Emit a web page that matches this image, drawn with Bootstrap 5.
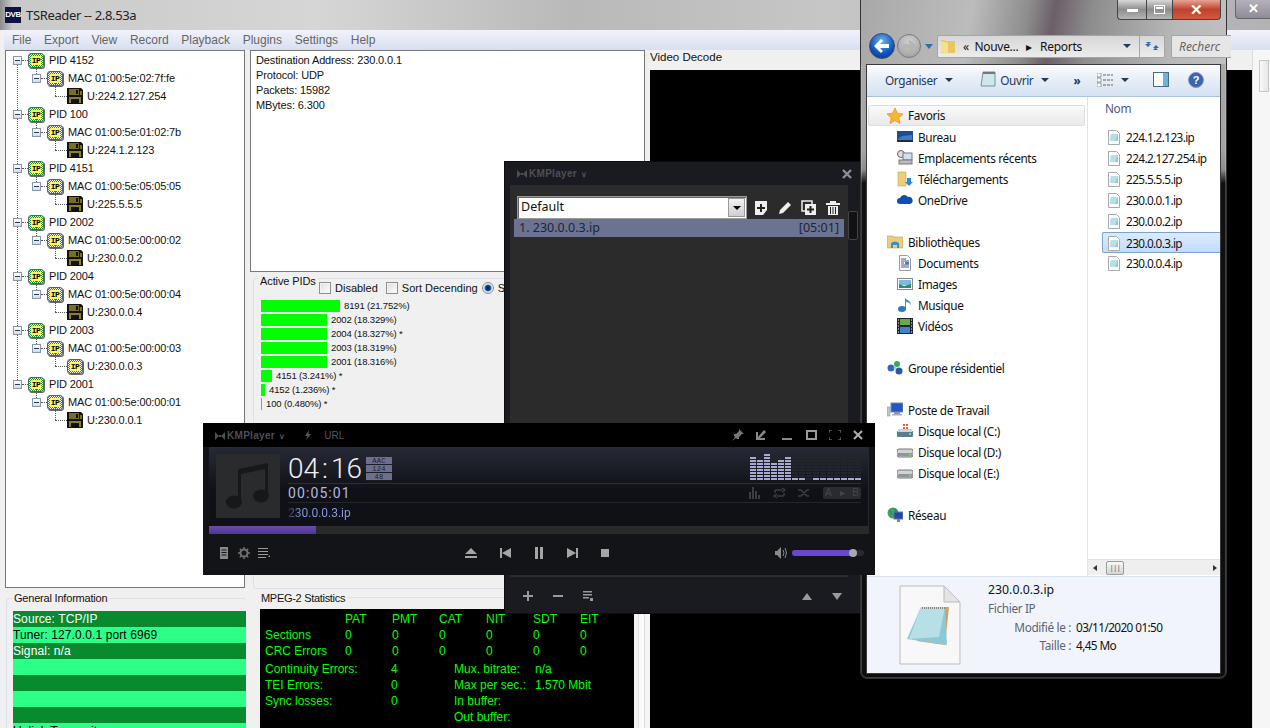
<!DOCTYPE html>
<html lang="fr">
<head>
<meta charset="utf-8">
<title>TSReader</title>
<link href="https://cdn.jsdelivr.net/npm/bootstrap@5.3.0/dist/css/bootstrap.min.css" rel="stylesheet">
<style>
html,body{margin:0;width:1270px;height:728px;overflow:hidden;background:#000;}
body{font-family:"Liberation Sans",Arial,sans-serif;position:relative;}
.sym-defs{width:0;height:0;overflow:hidden;display:block;}

/* TSReader */
.ts-win{position:absolute;left:0;top:0;width:1270px;height:728px;overflow:hidden;background:#f0f0f0;}
.ts-title{height:30px;background:linear-gradient(90deg,#8d8d8d 0,#c9c9c9 1%,#d6d6d6 25%,#b9b9b9 45%,#c6c6c6 65%,#b4b1b6 100%);padding-left:5px;gap:5px;}
.ts-logo{width:16px;height:16px;background:#0d1440;color:#fff;font:bold 8px/16px "Liberation Sans",sans-serif;text-align:center;letter-spacing:-.5px;}
.ts-cap{font:13px "Noto Sans",sans-serif;color:#222;letter-spacing:-.35px;}
.ts-x{margin-left:auto;align-self:flex-start;width:35px;height:19px;background:linear-gradient(#b5b0bb,#8f8b98);border:1px solid #666;border-top:0;border-right:0;border-radius:0 0 0 4px;color:#fff;text-align:center;font:bold 13px/18px "Liberation Sans",sans-serif;}
.ts-menu{height:20px;margin-left:4px;padding-left:8px;gap:12.7px;background:linear-gradient(#f1f3fb,#d8dff1);font:12px/20px "Liberation Sans",sans-serif;color:#666;}
.ts-body{display:grid;grid-template-columns:250px 400px 602px 18px;height:678px;}
.ts-left,.ts-mid,.ts-right{min-width:0;overflow:hidden;}
.ts-tree{margin-left:5px;width:240px;height:538px;background:#fff;border:1px solid #777;padding-top:0;font-size:11px;letter-spacing:-.15px;color:#111;overflow:hidden;}
.t-row{height:18px;position:relative;display:flex;align-items:center;}
.t-row.l0{padding-left:7px;}
.t-row.l1{padding-left:26px;}
.t-row.l2{padding-left:49px;}
.t-row.l0:not(.t-end)::before{content:"";position:absolute;left:11px;top:13px;height:50px;border-left:1px dotted #555;}
.t-row.l1::before{content:"";position:absolute;left:30px;top:-4px;height:9px;border-left:1px dotted #555;}
.t-row.l2::before{content:"";position:absolute;left:49px;top:-4px;height:13px;border-left:1px dotted #555;}
.t-xp{width:9px;height:9px;border:1px solid #8a97a8;background:linear-gradient(#fff,#d5dce6);flex:none;display:flex;align-items:center;justify-content:center;z-index:1;}
.t-xp::after{content:"";width:5px;height:1px;background:#223a66;}
.t-dash{height:0;border-top:1px dotted #555;flex:none;width:6px;}
.l2 .t-dash{width:12px;}
.ipi{width:16px;height:15px;flex:none;border:1px solid #55606a;border-radius:3px;background:repeating-conic-gradient(#129a2c 0 25%,#f2f7ee 0 50%) 0 0/2px 2px;box-shadow:1px 1px 0 #666;display:flex;align-items:center;justify-content:center;}
.ipi b{background:#fff65a;color:#000;font:bold 8px/9px "Liberation Mono",monospace;padding:0 1px;letter-spacing:-.5px;}
.t-txt{margin-left:5px;white-space:nowrap;}
.l2 .t-txt{margin-left:4px;}
.flop{width:16px;height:16px;flex:none;}
.grp-line{border:1px solid #dce1e7;border-radius:4px;position:relative;}
.grp-gen{margin:10px 0 0 6px;width:240px;height:140px;border-right:0;}
.grp-lbl{position:absolute;background:#f0f0f0;padding:0 2px;font-size:11.5px;line-height:14px;color:#111;white-space:nowrap;letter-spacing:-.1px;}
.grp-gen>.grp-lbl{left:5px;top:-8px;font-size:11px;letter-spacing:-.2px;}
.gen-rows{position:absolute;left:6px;right:0;top:12px;}
.gen-row{height:16px;background:#2aff8a;color:#000;font-size:12px;line-height:16px;letter-spacing:.1px;white-space:nowrap;}
.gen-row:nth-child(odd){background:#0a8a2e;color:#fff;}
.ts-info{height:222px;width:395px;background:#fff;border:1px solid #777;padding:2px 5px;font-size:11px;letter-spacing:-.13px;line-height:15px;color:#111;}
.grp-pid{margin:6px 0 0 3px;width:393px;height:311px;border-right:0;}
.grp-pid>.grp-lbl{left:4px;top:-5px;font-size:11px;}
.pid-opts{position:absolute;left:65px;top:2px;font-size:11px;color:#111;white-space:nowrap;line-height:14px;}
.cb-box{width:12px;height:12px;border:1px solid #8e8f8f;background:linear-gradient(135deg,#dcdcdc,#fff);box-shadow:inset 0 0 0 1px #f4f4f4;flex:none;}
.rd-box{width:12px;height:12px;border-radius:50%;border:1px solid #8e8f8f;background:radial-gradient(circle,#0e2b5e 0 2px,#2f7fc4 3px,#dfe7ef 4px);flex:none;}
.pid-list{position:absolute;left:7px;top:20px;font-size:9.5px;letter-spacing:-.15px;color:#111;}
.pid-row{height:14px;gap:4px;white-space:nowrap;line-height:14px;}
.pid-bar{height:12px;background:#0f0;flex:none;}
.mpeg-wrap{position:relative;height:130px;margin:8px 0 0 10px;width:390px;border-top:1px solid #dce1e7;}
.mpeg-wrap>.grp-lbl{left:-1px;top:-7px;font-size:11px;letter-spacing:-.3px;}
.mpeg{position:absolute;left:0;top:11px;width:374px;height:130px;background:#000;color:#0f0;font-size:12px;line-height:16px;padding:2px 0 0 5px;white-space:nowrap;}
.mp-grid{display:grid;grid-template-columns:80px repeat(6,47px);}
.mp-stats{display:grid;grid-template-columns:126px 63px 81px 1fr;margin-top:2px;}
.vid-lbl{font-size:11.5px;line-height:14px;color:#111;height:20px;}
.vid-black{background:#000;height:658px;}
.ts-sb{background:#f6f6f6;border-left:1px solid #ddd;padding:10px 2px 0 6px;}
.sb-top{height:32px;width:10px;background:linear-gradient(90deg,#f8f8f8,#e6e6e6);border:1px solid #c8c8c8;}
.mid-strip{position:absolute;left:634px;top:610px;width:16px;height:118px;background:linear-gradient(90deg,#f3f3f3 0 4px,#ddd 4px 5px,#fafafa 5px 10px,#ddd 10px 11px,#f5f5f5 11px);}

/* KMPlayer playlist */
.km-list{position:absolute;left:504px;top:161px;width:359px;height:453px;background:#1a1b20;border:1px solid #0d0d0f;color:#8d8f96;}
.km-bar{height:23px;padding:0 10px 0 12px;}
.km-brand{font:bold 10px "Liberation Sans",sans-serif;color:#4e4f55;letter-spacing:.3px;white-space:nowrap;}
.km-brand svg{vertical-align:-1px;margin-right:2px;}
.km-chev{color:#4e4f55;font-size:8px;margin-left:4px;}
.km-panel{margin-left:5px;width:339px;height:390px;background:#2b2b2b;padding:11px 0 0 4px;}
.km-side{width:14px;height:390px;padding-top:26px;}
.km-thumb{width:10px;height:29px;background:#121214;border:1px solid #444;border-radius:2px;}
.km-sel{width:230px;height:23px;background:#fff;border:1px solid #9a9a9a;margin-left:3px;font:12.5px/20px "Noto Sans",sans-serif;color:#111;padding-left:3px;box-shadow:inset 1px 1px 0 #666;}
.km-dd{margin-left:auto;width:17px;height:19px;margin-top:1px;margin-right:1px;background:linear-gradient(#f2f2f2,#cfcfcf);border:1px solid #999;}
.km-dd::after{content:"";display:block;margin:7px auto 0;width:0;height:0;border:4px solid transparent;border-top:4px solid #000;border-bottom:0;}
.km-tools{gap:8px;margin-left:6px;}
.km-item{width:330px;height:18px;background:#6b7391;color:#1f2436;font:12.5px/18px "Noto Sans",sans-serif;padding:0 5px;}
.km-foot{height:40px;border-top:2px solid #2b2b2b;padding:0 6px 0 13px;margin:0 14px 0 5px;}
.km-foot-g{gap:20px;}

/* KMPlayer main */
.km-main{position:absolute;left:203px;top:423px;width:672px;height:152px;background:#131417;color:#9a9a9a;}
.km-mtitle{height:24px;background:#000;padding:0 12px 0 12px;gap:10px;}
.km-url{font-size:10px;color:#56575c;margin-left:1px;}
.km-wins{margin-left:auto;gap:12px;}
.km-disp{margin-left:6px;width:660px;height:79px;background:linear-gradient(#262a36,#101116 55%);padding:7px 7px 0 7px;gap:8px;border-right:1px solid #25272e;}
.km-art{width:64px;height:64px;background:#2a2b2d;flex:none;}
.km-info{width:574px;}
.km-row1{height:30px;border-bottom:1px solid #2b2e36;}
.km-time{font:300 28px/30px Roboto,sans-serif;color:#eef0f6;gap:3px;white-space:nowrap;}
.km-tags{width:26px;margin-left:4px;margin-top:3px;gap:0;}
.km-tag{height:8px;background:#6e6f8e;color:#1c1d2b;font:7px/8px "Liberation Mono",monospace;text-align:center;border-bottom:1px solid #1b1d25;letter-spacing:.3px;}
.km-viz{margin-left:auto;height:26px;gap:1px;align-items:flex-end;}
.vz{width:6px;height:26px;background:repeating-linear-gradient(0deg,#23252e 0 2px,transparent 2px 3px);position:relative;display:flex;align-items:flex-end;}
.vz i{display:block;width:6px;background:repeating-linear-gradient(0deg,#a8abcf 0 2px,transparent 2px 3px);}
.km-row2{height:19px;border-bottom:1px solid #24262d;}
.km-dur{font:14px/19px Roboto,sans-serif;letter-spacing:1.1px;color:#b4b8e0;padding-top:1px;}
.km-ind{margin-left:auto;gap:12px;}
.km-ab{width:38px;height:12px;background:#2a2b30;border-radius:2px;color:#44454b;font:10px/12px "Liberation Sans",sans-serif;padding:0 2px;}
.km-file{font:12px/20px Roboto,sans-serif;background:linear-gradient(90deg,#33344a 0,#8b9be0 14px,#8b9be0);-webkit-background-clip:text;background-clip:text;color:transparent;width:66px;white-space:nowrap;}
.km-seek{margin-left:6px;width:660px;height:8px;background:#2a2a2a;}
.km-seek i{display:block;width:107px;height:8px;background:linear-gradient(#6a4cb0,#4e3690);}
.km-ctl{height:41px;padding:0 11px 4px 15px;}
.km-ctl-l{gap:8px;}
.km-ctl-m{margin-left:194px;gap:23px;}
.km-ctl-r{margin-left:auto;gap:4px;}
.km-vol{width:72px;height:6px;background:#2a2a2e;border-radius:3px;position:relative;}
.km-vol i{display:block;width:60px;height:6px;background:#6a45d0;border-radius:3px;}
.km-vol b{position:absolute;left:57px;top:-1px;width:8px;height:8px;border-radius:50%;background:#a9a9ad;}

/* Explorer */
.ex-win{position:absolute;left:860px;top:-1px;width:367px;height:680px;border:1px solid #333;border-radius:0 0 7px 7px;background:linear-gradient(#aeaeae 0,#a3a3a3 22%,#8d8d8d 25%,#111 27%,#0d0d0d 100%);padding:0 5px 5px 5px;box-shadow:inset 0 0 0 1px rgba(255,255,255,.2);}
.ex-top{height:64px;margin:0 -5px;padding:0 5px;background:linear-gradient(100deg,#a8a8a8,#bcbcbc 30%,#8d8d8d 45%,#6b5f68 52%,#8d8d8d 62%,#b8b8b8 85%,#c0c0c0);}
.ex-caps{height:34px;align-items:flex-start;justify-content:flex-end;}
.ex-cap{height:20px;border:1px solid #444;border-top:0;background:linear-gradient(#d8d8d8,#8c8c8c 50%,#b5b5b5);display:flex;align-items:center;justify-content:center;}
.ex-min{width:29px;border-radius:0 0 0 4px;border-right:0;}
.ex-max{width:26px;border-right:0;}
.ex-cls{width:49px;background:linear-gradient(#e6a396,#c0422d 50%,#d05a3e);border-radius:0 0 4px 0;color:#fff;font:bold 15px/18px "Liberation Sans",sans-serif;}
.ex-nav{height:24px;padding-left:3px;}
.ex-back{width:26px;height:26px;border-radius:50%;background:radial-gradient(circle at 50% 30%,#6db1f4,#0f53bd 60%,#0a2f78);border:1px solid #3a4a66;flex:none;}
.ex-fwd{width:24px;height:24px;border-radius:50%;margin-left:2px;background:radial-gradient(circle at 50% 30%,#d0d0d0,#9a9a9a);border:1px solid #7a7a7a;flex:none;}
.ex-tri{width:0;height:0;border:4px solid transparent;border-top:5px solid #2b6db5;border-bottom:0;flex:none;}
.ex-addr{height:23px;width:228px;margin-left:4px;background:linear-gradient(#d7d7d7,#ececec);border:1px solid #a5a5a5;border-radius:2px;font:12px "Noto Sans",sans-serif;letter-spacing:-.3px;color:#111;padding-left:3px;flex:none;white-space:nowrap;}
.ex-sep{width:25px;border-left:1px solid #a5a5a5;align-self:stretch;}
.ex-search{height:23px;width:60px;margin-left:6px;background:#e6e6e6;border:1px solid #a5a5a5;border-right:0;border-radius:2px 0 0 2px;font:italic 12px/21px "Noto Sans",sans-serif;color:#666;padding-left:7px;overflow:hidden;white-space:nowrap;flex:none;}
.ex-in{background:#fff;border:1px solid #3a3a3a;height:610px;width:355px;overflow:hidden;font:11.8px "Noto Sans",sans-serif;letter-spacing:-.35px;color:#111;}
.ex-tool{height:32px;background:linear-gradient(#fbfcfe,#e6edf7 50%,#d5e2f2);border-bottom:1px solid #a9c1dc;color:#1e395b;padding:0 0 2px 18px;white-space:nowrap;}
.tri-d{width:0;height:0;border:4px solid transparent;border-top:4px solid #1e395b;border-bottom:0;flex:none;}
.tl-open{margin-left:27px;}
.tl-view{margin-left:17px;}
.tl-help{margin-left:19px;}
.ex-main{height:479px;}
.ex-navp{width:221px;flex:none;border-right:1px solid #d6e5f5;padding-top:8px;}
.ex-fav{margin:0 1px;height:21px;width:217px;border:1px solid #dedede;border-radius:2px;background:linear-gradient(#fafafa,#e9e9e9);}
.n-row{height:21px;display:flex;align-items:center;white-space:nowrap;line-height:19px;padding-top:1px;}
.n-row svg{width:16px;height:16px;flex:none;margin:0 5px 0 0;}
.n-l0{padding-left:20px;}
.n-l1{padding-left:30px;}
.n-gap{height:21px;}
.ex-fav.n-row{padding-left:18px;padding-top:0;}
.ex-files{flex:1;min-width:0;}
.ex-nom{color:#4f5a83;padding:3px 0 0 17px;height:30px;}
.f-row{height:21px;gap:6px;display:flex;align-items:center;margin-left:14px;padding:0 0 1px 6px;white-space:nowrap;letter-spacing:-.62px;}
.f-row.on{background:linear-gradient(#dcebfc,#c2dcfd);border:1px solid #7da2ce;border-right:0;border-radius:2px 0 0 2px;margin-left:14px;padding:0 0 0 5px;margin-right:-1px;}
.f-row svg{width:12px;height:15px;flex:none;margin-top:1px;}
.ex-sb{height:16px;background:#efefef;border-top:1px solid #e3e3e3;margin-top:285px;padding:0 3px 0 5px;}
.ex-thumb{width:18px;height:14px;background:linear-gradient(#f8f8f8,#d5d5d5);border:1px solid #9b9b9b;border-radius:2px;margin-left:9px;color:#444;font-size:7px;line-height:12px;text-align:center;}
.tri-l{width:0;height:0;border:3px solid transparent;border-right:4px solid #333;border-left:0;}
.tri-r{width:0;height:0;border:3px solid transparent;border-left:4px solid #333;border-right:0;margin-left:auto;}
.ex-det{height:97px;background:#f1f5fb;border-top:1px solid #d9e3ef;padding:0 0 0 32px;}
.ex-bigf{width:62px;height:80px;flex:none;margin-top:8px;}
.ex-meta{margin-left:27px;padding-top:4px;line-height:18px;}
.m-name{letter-spacing:0;font-size:12.3px;}
.m-grey{color:#5a6478;}
.m-kv{display:grid;grid-template-columns:83px 1fr;column-gap:5px;margin-top:1px;}
.m-kv>span:nth-child(odd){text-align:right;color:#5a6478;}
.m-kv>span:nth-child(even){letter-spacing:-.6px;}
</style>
</head>
<body>
<svg class="sym-defs" aria-hidden="true">
<defs>
<symbol id="flop" viewBox="0 0 16 16"><path d="M0 0h14l2 2v14H0z" fill="#111"/><rect x="2" y="1" width="10" height="6" fill="#77701c"/><rect x="9" y="2" width="2" height="4" fill="#111"/><rect x="2" y="9" width="12" height="6" fill="#8a8226"/><rect x="4" y="11" width="8" height="4" fill="#111"/><rect x="13" y="3" width="2" height="4" fill="#77701c"/></symbol>
<symbol id="file" viewBox="0 0 12 15"><path d="M.5.5h8l3 3v11H.5z" fill="#fdfdfd" stroke="#a8a8a8"/><path d="M3 4h7v7H2z" fill="#8ccbd6"/><path d="M3 4h7L7 11H2z" fill="#b6e0e6"/></symbol>
<symbol id="kmlogo" viewBox="0 0 10 8"><path d="M0 0l4 4-4 4zM10 0L6 4l4 4zM4 3h2v2H4z" fill="#4e4f55"/></symbol>
</defs>
</svg>

<section class="ts-win">
  <div class="ts-title d-flex align-items-center">
    <div class="ts-logo">DVB</div>
    <div class="ts-cap">TSReader -- 2.8.53a</div>
    <div class="ts-x">&#10005;</div>
  </div>
  <nav class="ts-menu d-flex"><span>File</span><span>Export</span><span>View</span><span>Record</span><span>Playback</span><span>Plugins</span><span>Settings</span><span>Help</span></nav>
  <div class="ts-body">
    <div class="ts-left">
      <div class="ts-tree">
        <div class="t-row l0"><span class="t-xp"></span><span class="t-dash"></span><span class="ipi"><b>IP</b></span><span class="t-txt">PID 4152</span></div>
        <div class="t-row l1"><span class="t-xp"></span><span class="t-dash"></span><span class="ipi"><b>IP</b></span><span class="t-txt">MAC 01:00:5e:02:7f:fe</span></div>
        <div class="t-row l2"><span class="t-dash"></span><svg class="flop"><use href="#flop"/></svg><span class="t-txt">U:224.2.127.254</span></div>
        <div class="t-row l0"><span class="t-xp"></span><span class="t-dash"></span><span class="ipi"><b>IP</b></span><span class="t-txt">PID 100</span></div>
        <div class="t-row l1"><span class="t-xp"></span><span class="t-dash"></span><span class="ipi"><b>IP</b></span><span class="t-txt">MAC 01:00:5e:01:02:7b</span></div>
        <div class="t-row l2"><span class="t-dash"></span><svg class="flop"><use href="#flop"/></svg><span class="t-txt">U:224.1.2.123</span></div>
        <div class="t-row l0"><span class="t-xp"></span><span class="t-dash"></span><span class="ipi"><b>IP</b></span><span class="t-txt">PID 4151</span></div>
        <div class="t-row l1"><span class="t-xp"></span><span class="t-dash"></span><span class="ipi"><b>IP</b></span><span class="t-txt">MAC 01:00:5e:05:05:05</span></div>
        <div class="t-row l2"><span class="t-dash"></span><svg class="flop"><use href="#flop"/></svg><span class="t-txt">U:225.5.5.5</span></div>
        <div class="t-row l0"><span class="t-xp"></span><span class="t-dash"></span><span class="ipi"><b>IP</b></span><span class="t-txt">PID 2002</span></div>
        <div class="t-row l1"><span class="t-xp"></span><span class="t-dash"></span><span class="ipi"><b>IP</b></span><span class="t-txt">MAC 01:00:5e:00:00:02</span></div>
        <div class="t-row l2"><span class="t-dash"></span><svg class="flop"><use href="#flop"/></svg><span class="t-txt">U:230.0.0.2</span></div>
        <div class="t-row l0"><span class="t-xp"></span><span class="t-dash"></span><span class="ipi"><b>IP</b></span><span class="t-txt">PID 2004</span></div>
        <div class="t-row l1"><span class="t-xp"></span><span class="t-dash"></span><span class="ipi"><b>IP</b></span><span class="t-txt">MAC 01:00:5e:00:00:04</span></div>
        <div class="t-row l2"><span class="t-dash"></span><svg class="flop"><use href="#flop"/></svg><span class="t-txt">U:230.0.0.4</span></div>
        <div class="t-row l0"><span class="t-xp"></span><span class="t-dash"></span><span class="ipi"><b>IP</b></span><span class="t-txt">PID 2003</span></div>
        <div class="t-row l1"><span class="t-xp"></span><span class="t-dash"></span><span class="ipi"><b>IP</b></span><span class="t-txt">MAC 01:00:5e:00:00:03</span></div>
        <div class="t-row l2"><span class="t-dash"></span><span class="ipi"><b>IP</b></span><span class="t-txt">U:230.0.0.3</span></div>
        <div class="t-row l0 t-end"><span class="t-xp"></span><span class="t-dash"></span><span class="ipi"><b>IP</b></span><span class="t-txt">PID 2001</span></div>
        <div class="t-row l1"><span class="t-xp"></span><span class="t-dash"></span><span class="ipi"><b>IP</b></span><span class="t-txt">MAC 01:00:5e:00:00:01</span></div>
        <div class="t-row l2"><span class="t-dash"></span><svg class="flop"><use href="#flop"/></svg><span class="t-txt">U:230.0.0.1</span></div>
      </div>
      <div class="grp-line grp-gen">
        <span class="grp-lbl">General Information</span>
        <div class="gen-rows">
          <div class="gen-row">Source: TCP/IP</div>
          <div class="gen-row">Tuner: 127.0.0.1 port 6969</div>
          <div class="gen-row">Signal: n/a</div>
          <div class="gen-row"></div>
          <div class="gen-row"></div>
          <div class="gen-row"></div>
          <div class="gen-row"></div>
          <div class="gen-row">Uplink Transmit</div>
        </div>
      </div>
    </div>
    <div class="ts-mid">
      <div class="ts-info">Destination Address: 230.0.0.1<br>Protocol: UDP<br>Packets: 15982<br>MBytes: 6.300</div>
      <div class="grp-line grp-pid">
        <span class="grp-lbl">Active PIDs</span>
        <div class="pid-opts d-flex align-items-center">
          <span class="cb-box"></span><span class="ms-1">Disabled</span>
          <span class="cb-box ms-2"></span><span class="ms-1">Sort Decending</span>
          <span class="rd-box ms-1"></span><span class="ms-1">Show PIDs</span>
        </div>
        <div class="pid-list">
          <div class="pid-row d-flex align-items-center"><span class="pid-bar" style="width:79px"></span><span>8191 (21.752%)</span></div>
          <div class="pid-row d-flex align-items-center"><span class="pid-bar" style="width:66px"></span><span>2002 (18.329%)</span></div>
          <div class="pid-row d-flex align-items-center"><span class="pid-bar" style="width:66px"></span><span>2004 (18.327%) *</span></div>
          <div class="pid-row d-flex align-items-center"><span class="pid-bar" style="width:66px"></span><span>2003 (18.319%)</span></div>
          <div class="pid-row d-flex align-items-center"><span class="pid-bar" style="width:66px"></span><span>2001 (18.316%)</span></div>
          <div class="pid-row d-flex align-items-center"><span class="pid-bar" style="width:11px"></span><span>4151 (3.241%) *</span></div>
          <div class="pid-row d-flex align-items-center"><span class="pid-bar" style="width:4px"></span><span>4152 (1.236%) *</span></div>
          <div class="pid-row d-flex align-items-center"><span class="pid-bar" style="width:1px"></span><span>100 (0.480%) *</span></div>
        </div>
      </div>
      <div class="mpeg-wrap">
        <span class="grp-lbl">MPEG-2 Statistics</span>
        <div class="mpeg">
          <div class="mp-grid">
            <span></span><span>PAT</span><span>PMT</span><span>CAT</span><span>NIT</span><span>SDT</span><span>EIT</span>
            <span>Sections</span><span>0</span><span>0</span><span>0</span><span>0</span><span>0</span><span>0</span>
            <span>CRC Errors</span><span>0</span><span>0</span><span>0</span><span>0</span><span>0</span><span>0</span>
          </div>
          <div class="mp-stats">
            <span>Continuity Errors:</span><span>4</span><span>Mux. bitrate:</span><span>n/a</span>
            <span>TEI Errors:</span><span>0</span><span>Max per sec.:</span><span>1.570 Mbit</span>
            <span>Sync losses:</span><span>0</span><span>In buffer:</span><span></span>
            <span></span><span></span><span>Out buffer:</span><span></span>
          </div>
        </div>
      </div>
    </div>
    <div class="ts-right">
      <div class="vid-lbl">Video Decode</div>
      <div class="vid-black"></div>
    </div>
    <div class="ts-sb"><div class="sb-top"></div></div>
  </div>
  <div class="mid-strip"></div>
</section>

<section class="km-list">
  <div class="km-bar d-flex align-items-center justify-content-between">
    <span class="km-brand"><svg width="10" height="8"><use href="#kmlogo"/></svg>KMPlayer<span class="km-chev">&#8744;</span></span>
    <svg width="10" height="10" viewBox="0 0 10 10"><path d="M1 1l8 8M9 1L1 9" stroke="#8d8f96" stroke-width="2.4"/></svg>
  </div>
  <div class="d-flex">
    <div class="km-panel">
      <div class="d-flex align-items-center">
        <div class="km-sel d-flex">Default<span class="km-dd"></span></div>
        <div class="km-tools d-flex align-items-center">
          <svg width="16" height="16" viewBox="0 0 16 16"><path d="M2 1h12v9l-4 5H2z" fill="#eee"/><path d="M7 4h2v3h3v2H9v3H7V9H4V7h3z" fill="#222"/></svg>
          <svg width="16" height="16" viewBox="0 0 16 16"><path d="M11 2l3 3-8 8-4 1 1-4z" fill="#eee"/></svg>
          <svg width="16" height="16" viewBox="0 0 16 16"><path d="M1 1h10v10H1z" fill="none" stroke="#eee" stroke-width="1.5"/><path d="M4 4h11v11H4z" fill="#eee"/><path d="M8.500 6h2v2.500H13v2h-2.500V13h-2v-2.500H6v-2h2.500z" fill="#222"/></svg>
          <svg width="16" height="16" viewBox="0 0 16 16"><path d="M1 3h14v2H1zM5 1h6v2H5zM3 6h10v9H3z" fill="#eee"/><path d="M5.500 7v7M8 7v7M10.500 7v7" stroke="#222"/></svg>
        </div>
      </div>
      <div class="km-item d-flex justify-content-between"><span>1. 230.0.0.3.ip</span><span>[05:01]</span></div>
    </div>
    <div class="km-side"><div class="km-thumb"></div></div>
  </div>
  <div class="km-foot d-flex align-items-center justify-content-between">
    <div class="km-foot-g d-flex align-items-center">
      <svg width="10" height="10" viewBox="0 0 10 10"><path d="M4 0h2v4h4v2H6v4H4V6H0V4h4z" fill="#9a9a9a"/></svg>
      <svg width="10" height="10" viewBox="0 0 10 10"><path d="M0 4h10v2H0z" fill="#9a9a9a"/></svg>
      <svg width="10" height="10" viewBox="0 0 10 10"><path d="M0 0h9v1.500H0zM0 3h9v1.500H0zM0 6h6v1.500H0zM7 7h3v3H7z" fill="#9a9a9a"/></svg>
    </div>
    <div class="km-foot-g d-flex align-items-center">
      <svg width="10" height="7" viewBox="0 0 10 7"><path d="M5 0l5 7H0z" fill="#9a9a9a"/></svg>
      <svg width="10" height="7" viewBox="0 0 10 7"><path d="M5 7L0 0h10z" fill="#9a9a9a"/></svg>
    </div>
  </div>
</section>

<section class="ex-win">
  <div class="ex-top">
    <div class="ex-caps d-flex">
      <div class="ex-cap ex-min"><svg width="11" height="4"><rect width="11" height="3" y="1" fill="#fff"/></svg></div>
      <div class="ex-cap ex-max"><svg width="11" height="9"><rect x=".5" y=".5" width="10" height="8" fill="none" stroke="#fff"/><rect x="2" y="2" width="7" height="2" fill="#fff"/></svg></div>
      <div class="ex-cap ex-cls">&#10005;</div>
    </div>
    <div class="ex-nav d-flex align-items-center">
      <div class="ex-back d-flex align-items-center justify-content-center"><svg width="16" height="14" viewBox="0 0 16 14"><path d="M7 0l2 2-3 3h9v4H6l3 3-2 2-7-7z" fill="#fff"/></svg></div>
      <div class="ex-fwd d-flex align-items-center justify-content-center"><svg width="14" height="12" viewBox="0 0 16 14"><path d="M9 0L7 2l3 3H1v4h9l-3 3 2 2 7-7z" fill="#b4b4b4"/></svg></div>
      <span class="ex-tri ms-1"></span>
      <div class="ex-addr d-flex align-items-center">
        <svg width="14" height="16" viewBox="0 0 14 16"><path d="M0 2h4v1h10v12H0z" fill="#e8c85e"/><path d="M0 3l7 2v11L0 14z" fill="#f6df8e"/></svg>
        <span class="ms-2">&#171;&nbsp; Nouve...</span><span class="mx-2">&#9656;</span><span>Reports</span>
        <span class="tri-d ms-auto me-1"></span>
        <div class="ex-sep d-flex align-items-center justify-content-center ms-1"><svg width="14" height="14" viewBox="0 0 14 14"><path d="M6 0v3H1l2 2H0l3 3 3-3H4l2-2z" fill="#2a6ab8"/><path d="M8 14v-3h5l-2-2h3l-3-3-3 3h2l-2 2z" fill="#2a6ab8"/></svg></div>
      </div>
      <div class="ex-search">Recherc</div>
    </div>
  </div>
  <div class="ex-in">
    <div class="ex-tool d-flex align-items-center">
      <span>Organiser</span><span class="tri-d ms-2"></span>
      <svg class="tl-open" width="16" height="17" viewBox="0 0 16 17"><path d="M3 1h12v14H1z" fill="#cfe6ec" stroke="#7d8f9c"/><path d="M3 1h12v2H3z" fill="#777"/></svg>
      <span class="ms-1">Ouvrir</span><span class="tri-d ms-2"></span>
      <span class="ms-4 fw-bold">&#187;</span>
      <svg class="tl-view" width="16" height="14" viewBox="0 0 16 14"><path d="M0 0h4v4H0zM0 5h4v4H0zM0 10h4v4H0z" fill="#fff" stroke="#777" stroke-width=".7"/><path d="M6 2h10M6 7h10M6 12h10" stroke="#566" stroke-dasharray="3 1"/></svg>
      <span class="tri-d ms-2"></span>
      <svg class="ms-4" width="16" height="15" viewBox="0 0 16 15"><rect x=".5" y=".5" width="15" height="14" fill="#fff" stroke="#4a6a8c"/><rect x="10" y="1" width="5" height="13" fill="#6ab3dc"/></svg>
      <svg class="tl-help" width="16" height="16" viewBox="0 0 16 16"><circle cx="8" cy="8" r="7.500" fill="#3b64b4" stroke="#8b95a8"/><text x="8" y="12" text-anchor="middle" fill="#fff" font-size="11" font-weight="bold" font-family="Liberation Sans">?</text></svg>
    </div>
    <div class="ex-main d-flex">
      <div class="ex-navp">
        <div class="n-row ex-fav"><svg viewBox="0 0 16 16"><path d="M8 0l2.400 5.200 5.600.7-4.100 3.900 1.100 5.600L8 12.600 3 15.400l1.100-5.600L0 5.900l5.600-.7z" fill="#f8b632" stroke="#d9822b" stroke-width=".6"/></svg>Favoris</div>
        <div class="n-row n-l1"><svg viewBox="0 0 16 16"><rect y="2" width="16" height="11" fill="#1d4d94"/><rect y="11" width="16" height="2" fill="#2a2a2a"/><path d="M1 10l4-3 10-1v5H1z" fill="#3b7dc5"/></svg>Bureau</div>
        <div class="n-row n-l1"><svg viewBox="0 0 16 16"><circle cx="4" cy="4" r="3.500" fill="#ddd" stroke="#666"/><rect x="6" y="3" width="9" height="7" fill="#cfe0ee" stroke="#778"/><rect x="2" y="10" width="13" height="4" fill="#bbb" stroke="#778"/></svg>Emplacements récents</div>
        <div class="n-row n-l1"><svg viewBox="0 0 16 16"><path d="M1 1h8v14H1z" fill="#eccf76" stroke="#b6983f" stroke-width=".5"/><path d="M10 7h4v4h2l-4 4-4-4h2z" fill="#2e86d8"/></svg>Téléchargements</div>
        <div class="n-row n-l1"><svg viewBox="0 0 16 16"><path d="M3 12a3 3 0 0 1 0-6 4.500 4.500 0 0 1 8-1 3.500 3.500 0 0 1 2 7z" fill="#0f4fb0"/></svg>OneDrive</div>
        <div class="n-gap"></div>
        <div class="n-row n-l0"><svg viewBox="0 0 16 16"><path d="M0 2h6l1 1h9v11H0z" fill="#e8cd7a" stroke="#b6983f" stroke-width=".5"/><path d="M4 14V9q4-3 8 0v5h-2v-3H6v3z" fill="#3d8ed0"/></svg>Bibliothèques</div>
        <div class="n-row n-l1"><svg viewBox="0 0 16 16"><path d="M2.500.5h8l3 3v12h-11z" fill="#fff" stroke="#99a"/><path d="M4 4h5M4 6h8M4 8h3M4 10h8M4 12h8" stroke="#557"/><rect x="8" y="7" width="4" height="2.500" fill="#3a80c8"/></svg>Documents</div>
        <div class="n-row n-l1"><svg viewBox="0 0 16 16"><rect x=".5" y="2.500" width="15" height="11" fill="#fff" stroke="#888"/><rect x="2" y="4" width="12" height="5" fill="#7fb9e0"/><path d="M2 12V8l5 2 7-2v4z" fill="#2f8a6e"/></svg>Images</div>
        <div class="n-row n-l1"><svg viewBox="0 0 16 16"><path d="M8 1c2 2 6 3 6 7-1-2-3-3-5-3v7H8z" fill="#3a90d8"/><ellipse cx="5" cy="12" rx="4" ry="3" fill="#2a78c8"/></svg>Musique</div>
        <div class="n-row n-l1"><svg viewBox="0 0 16 16"><rect width="16" height="16" fill="#223"/><rect x="3" y="1" width="10" height="6" fill="#6aa84f"/><rect x="3" y="9" width="10" height="6" fill="#3d85c6"/><path d="M1 2h1M1 5h1M1 8h1M1 11h1M1 14h1M14 2h1M14 5h1M14 8h1M14 11h1M14 14h1" stroke="#fff"/></svg>Vidéos</div>
        <div class="n-gap"></div>
        <div class="n-row n-l0"><svg viewBox="0 0 16 16"><circle cx="4" cy="8" r="3.500" fill="#3567b8"/><circle cx="10" cy="4" r="3" fill="#3fa55a"/><circle cx="12" cy="11" r="3.500" fill="#2d56a5"/><circle cx="8" cy="8" r="1.500" fill="#9cc"/></svg>Groupe résidentiel</div>
        <div class="n-gap"></div>
        <div class="n-row n-l0"><svg viewBox="0 0 16 16"><rect x="4" y="1" width="12" height="9" fill="#2456c4" stroke="#789"/><rect x="7" y="10" width="6" height="2" fill="#8a99a8"/><rect x="5" y="12" width="10" height="1.500" fill="#aab"/><rect x="0" y="5" width="3" height="9" fill="#bfc9d2" stroke="#789" stroke-width=".5"/></svg>Poste de Travail</div>
        <div class="n-row n-l1"><svg viewBox="0 0 16 16"><path d="M6 1h2v2H6zM9 1h2v2H9zM6 4h2v2H6zM9 4h2v2H9z" fill="#e2632f"/><rect y="8" width="16" height="6" rx="1" fill="#5a7c8c"/><rect x="1" y="6" width="14" height="3" fill="#c8d4dc"/><rect x="12" y="10" width="2" height="2" fill="#7fdc5f"/></svg>Disque local (C:)</div>
        <div class="n-row n-l1"><svg viewBox="0 0 16 16"><rect y="5" width="16" height="8" rx="2" fill="#cfd3d6" stroke="#777"/><rect x="1" y="9" width="14" height="3" fill="#8f9599"/><rect x="12" y="10" width="2" height="1.500" fill="#7fdc5f"/></svg>Disque local (D:)</div>
        <div class="n-row n-l1"><svg viewBox="0 0 16 16"><rect y="5" width="16" height="8" rx="2" fill="#cfd3d6" stroke="#777"/><rect x="1" y="9" width="14" height="3" fill="#8f9599"/><rect x="12" y="10" width="2" height="1.500" fill="#7fdc5f"/></svg>Disque local (E:)</div>
        <div class="n-gap"></div>
        <div class="n-row n-l0"><svg viewBox="0 0 16 16"><circle cx="6" cy="6" r="5.500" fill="#3fa55a"/><path d="M2 3q4 1 3 6M8 1q-2 4 3 5" fill="#3570c8"/><rect x="7" y="5" width="9" height="7" fill="#1f47b8" stroke="#678"/><rect x="10" y="12" width="3" height="3" fill="#789"/></svg>Réseau</div>
      </div>
      <div class="ex-files">
        <div class="ex-nom">Nom</div>
        <div class="f-row"><svg><use href="#file"/></svg>224.1.2.123.ip</div>
        <div class="f-row"><svg><use href="#file"/></svg>224.2.127.254.ip</div>
        <div class="f-row"><svg><use href="#file"/></svg>225.5.5.5.ip</div>
        <div class="f-row"><svg><use href="#file"/></svg>230.0.0.1.ip</div>
        <div class="f-row"><svg><use href="#file"/></svg>230.0.0.2.ip</div>
        <div class="f-row on"><svg><use href="#file"/></svg>230.0.0.3.ip</div>
        <div class="f-row"><svg><use href="#file"/></svg>230.0.0.4.ip</div>
        <div class="ex-sb d-flex align-items-center"><span class="tri-l"></span><span class="ex-thumb">|||</span><span class="tri-r"></span></div>
      </div>
    </div>
    <div class="ex-det d-flex">
      <svg class="ex-bigf" viewBox="0 0 62 80"><path d="M1 1h44l16 16v62H1z" fill="#f8f8f8" stroke="#bbb"/><path d="M45 1v16h16z" fill="#e4e4e4" stroke="#bbb"/><path d="M24 22h26l-4 38-28-4z" fill="#cfa35c"/><path d="M22 22h24l2 38-40-6z" fill="#8cc8d6"/><path d="M22 22h24l-6 30-30 2z" fill="#b7e0e6"/><path d="M23 23h23" stroke="#888" stroke-width="2" stroke-dasharray="1 1"/></svg>
      <div class="ex-meta">
        <div class="m-name">230.0.0.3.ip</div>
        <div class="m-grey">Fichier IP</div>
        <div class="m-kv"><span>Modifié le :</span><span>03/11/2020 01:50</span><span>Taille :</span><span>4,45 Mo</span></div>
      </div>
    </div>
  </div>
</section>

<section class="km-main">
  <div class="km-mtitle d-flex align-items-center">
    <span class="km-brand"><svg width="10" height="8"><use href="#kmlogo"/></svg>KMPlayer<span class="km-chev">&#8744;</span></span>
    <svg class="ms-2" width="10" height="10" viewBox="0 0 10 10"><path d="M6 0L2 6h2.500L3 10l5-6H5.500z" fill="#56575c"/></svg>
    <span class="km-url">URL</span>
    <div class="km-wins d-flex align-items-center">
      <svg width="12" height="12" viewBox="0 0 12 12"><path d="M7 0l5 5-2 0-3 3 0 2-2 0-1-1-4 3 3-4-1-1 0-2 2 0 3-3z" fill="#777"/></svg>
      <svg width="12" height="12" viewBox="0 0 12 12"><path d="M0 3h2v5l6-7 2 2-6 6h5v2H0z" fill="#8a8a8a"/></svg>
      <svg width="14" height="12" viewBox="0 0 14 12"><path d="M2 9h10v2H2z" fill="#8a8a8a"/></svg>
      <svg width="11" height="10" viewBox="0 0 11 10"><path d="M1 1h9v8H1z" fill="none" stroke="#9a9a9a" stroke-width="2"/></svg>
      <svg width="12" height="10" viewBox="0 0 12 10"><path d="M0 3V0h3M9 0h3v3M12 7v3H9M3 10H0V7" fill="none" stroke="#8a8a8a"/></svg>
      <svg width="10" height="10" viewBox="0 0 10 10"><path d="M1 1l8 8M9 1L1 9" stroke="#b0b0b0" stroke-width="2"/></svg>
    </div>
  </div>
  <div class="km-disp d-flex">
    <div class="km-art d-flex align-items-center justify-content-center">
      <svg width="44" height="50" viewBox="0 0 44 50"><path d="M12 8L42 2v32h-3V8L15 13v28h-3z" fill="#17181a"/><ellipse cx="8" cy="41" rx="8" ry="6.500" fill="#17181a"/><ellipse cx="35" cy="35" rx="8" ry="6.500" fill="#17181a"/></svg>
    </div>
    <div class="km-info">
      <div class="km-row1 d-flex">
        <div class="km-time d-flex"><span>04</span><span>:</span><span>16</span></div>
        <div class="km-tags d-flex flex-column"><span class="km-tag">AAC</span><span class="km-tag">124</span><span class="km-tag">48</span></div>
        <div class="km-viz d-flex">
          <span class="vz"><i style="height:24px"></i></span><span class="vz"><i style="height:21px"></i></span><span class="vz"><i style="height:26px"></i></span><span class="vz"><i style="height:18px"></i></span><span class="vz"><i style="height:21px"></i></span><span class="vz"><i style="height:24px"></i></span><span class="vz"><i style="height:2px"></i></span><span class="vz"><i style="height:2px"></i></span><span class="vz"><i style="height:0"></i></span><span class="vz"><i style="height:2px"></i></span><span class="vz"><i style="height:2px"></i></span><span class="vz"><i style="height:2px"></i></span><span class="vz"><i style="height:2px"></i></span><span class="vz"><i style="height:2px"></i></span><span class="vz"><i style="height:2px"></i></span><span class="vz"><i style="height:2px"></i></span>
        </div>
      </div>
      <div class="km-row2 d-flex align-items-center">
        <span class="km-dur">00:05:01</span>
        <div class="km-ind d-flex align-items-center">
          <svg width="12" height="12" viewBox="0 0 12 12"><path d="M0 5h2v7H0zM3 0h2v12H3zM6 4h2v8H6zM9 8h2v4H9z" fill="#3c3d43"/></svg>
          <svg width="13" height="12" viewBox="0 0 13 12"><path d="M2 6V4q0-1 1-1h6M9 1l3 2-3 2M11 6v2q0 1-1 1H4M4 7L1 9l3 2" fill="none" stroke="#3c3d43" stroke-width="1.500"/></svg>
          <svg width="13" height="12" viewBox="0 0 13 12"><path d="M0 3h3l6 6h2M0 9h3l6-6h2" fill="none" stroke="#3c3d43" stroke-width="1.500"/></svg>
          <div class="km-ab d-flex justify-content-between"><span>A</span><span>&#9656;</span><span>B</span></div>
        </div>
      </div>
      <div class="km-file">230.0.0.3.ip</div>
    </div>
  </div>
  <div class="km-seek"><i></i></div>
  <div class="km-ctl d-flex align-items-center">
    <div class="km-ctl-l d-flex align-items-center">
      <svg width="12" height="12" viewBox="0 0 10 12"><path d="M1 0h8v12H1z" fill="#8a8a8a"/><path d="M2.500 3h5M2.500 5.500h5M2.500 8h5" stroke="#131417"/></svg>
      <svg width="12" height="12" viewBox="0 0 12 12"><circle cx="6" cy="6" r="3.500" fill="none" stroke="#6f6f6f" stroke-width="2"/><path d="M6 0v2M6 10v2M0 6h2M10 6h2M1.800 1.800l1.400 1.400M8.800 8.800l1.400 1.400M1.800 10.200l1.400-1.400M8.800 3.200l1.400-1.400" stroke="#6f6f6f" stroke-width="1.500"/></svg>
      <svg width="13" height="12" viewBox="0 0 13 12"><path d="M0 1h10v1H0zM0 4h10v1H0zM0 7h10v1H0zM0 10h8v1H0zM10 10h2V8z" fill="#9a9a9a"/></svg>
    </div>
    <div class="km-ctl-m d-flex align-items-center">
      <svg width="12" height="10" viewBox="0 0 12 10"><path d="M6 0l6 6H0zM0 8h12v2H0z" fill="#a5a5a5"/></svg>
      <svg width="11" height="10" viewBox="0 0 11 10"><path d="M0 0h2v10H0zM11 0v10L2 5z" fill="#a5a5a5"/></svg>
      <svg width="10" height="12" viewBox="0 0 10 12"><path d="M1 0h3v12H1zM6 0h3v12H6z" fill="#a5a5a5"/></svg>
      <svg width="11" height="10" viewBox="0 0 11 10"><path d="M0 0v10l9-5zM9 0h2v10H9z" fill="#a5a5a5"/></svg>
      <svg width="8" height="8" viewBox="0 0 8 8"><path d="M0 0h8v8H0z" fill="#a5a5a5"/></svg>
    </div>
    <div class="km-ctl-r d-flex align-items-center">
      <svg width="13" height="12" viewBox="0 0 13 12"><path d="M0 4h2l4-4v12L2 8H0z" fill="#8a8a8a"/><path d="M8 3q2 3 0 6M10 1q3 5 0 10" fill="none" stroke="#8a8a8a"/></svg>
      <div class="km-vol"><i></i><b></b></div>
    </div>
  </div>
</section>
</body>
</html>
